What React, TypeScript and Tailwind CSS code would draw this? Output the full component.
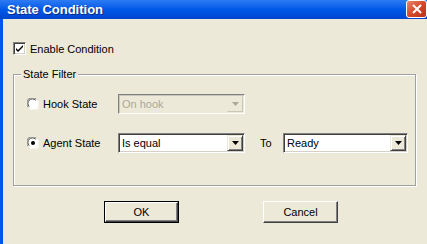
import React from "react"

const font = { fontFamily: "Tahoma, 'Liberation Sans', Arial, sans-serif" }

const Combo: React.FC<{ value: string; width: string; disabled?: boolean }> = ({ value, width, disabled }) => {
    return (
        <div
            className={`${width} h-[20px] flex border border-t-[#808080] border-l-[#808080] border-b-white border-r-white ${
                disabled ? "bg-[#ECE9D8] shadow-[inset_1px_1px_0_#C9C7BA]" : "bg-white shadow-[inset_1px_1px_0_#404040,inset_-1px_-1px_0_#D4D0C8]"
            }`}
        >
            <div className={`flex-1 flex items-center pl-[3px] pt-[1px] text-[11px] ${disabled ? "text-[#ACA899]" : "text-black"}`}>
                {value}
            </div>
            <div className="p-[1px] pl-0">
                <div
                    className={`w-[16px] h-full flex items-center justify-center bg-[#ECE9D8] border border-t-[#ECE9D8] border-l-[#ECE9D8] ${
                        disabled ? "border-b-[#C9C7BA] border-r-[#C9C7BA]" : "border-b-[#404040] border-r-[#404040] shadow-[inset_1px_1px_0_#fff,inset_-1px_-1px_0_#808080]"
                    }`}
                >
                    <svg width="7" height="4" viewBox="0 0 7 4">
                        <path d="M0 0h7L3.5 4z" fill={disabled ? "#ACA899" : "#000"} />
                    </svg>
                </div>
            </div>
        </div>
    )
}

const Radio: React.FC<{ checked?: boolean }> = ({ checked }) => (
    <svg width="12" height="12" viewBox="0 0 12 12" className="shrink-0">
        <circle cx="6" cy="6" r="5.5" fill="#fff" />
        <path d="M1.2 9.2A5.5 5.5 0 0 1 9.2 1.2" stroke="#808080" strokeWidth="1" fill="none" />
        <path d="M2.2 8.6A4.5 4.5 0 0 1 8.6 2.2" stroke="#404040" strokeWidth="1" fill="none" />
        <path d="M10.8 2.8A5.5 5.5 0 0 1 2.8 10.8" stroke="#fff" strokeWidth="1" fill="none" />
        {checked && <circle cx="6" cy="6" r="2" fill="#000" />}
    </svg>
)

const Button: React.FC<{ label: string; isDefault?: boolean }> = ({ label, isDefault }) => (
    <div className={`w-[75px] h-[22px] ${isDefault ? "border border-black" : ""}`}>
        <div
            className={`w-full h-full flex items-center justify-center text-[11px] text-black bg-[#ECE9D8] border border-t-white border-l-white border-b-[#404040] border-r-[#404040] shadow-[inset_-1px_-1px_0_#808080]`}
        >
            {label}
        </div>
    </div>
)

export default function App() {
    return (
        <div className="w-[427px] h-[244px] flex flex-col bg-[#ECE9D8] overflow-hidden" style={font}>
            {/* Title bar */}
            <div className="h-[19px] flex items-center justify-between pl-[7px] pr-0 bg-gradient-to-b from-[#2C7BF3] via-[#0058E8] to-[#0045D0]">
                <span className="text-white font-bold text-[13px] leading-none [text-shadow:1px_1px_0_#0A2A8A]">State Condition</span>
                <div className="w-[21px] h-[18px] -mt-[1px] rounded-[3px] border border-white bg-gradient-to-br from-[#E9856A] via-[#D8482A] to-[#B8301A] flex items-center justify-center">
                    <svg width="10" height="10" viewBox="0 0 10 10">
                        <path d="M1 1L9 9M9 1L1 9" stroke="#fff" strokeWidth="2" />
                    </svg>
                </div>
            </div>

            <div className="flex-1 flex">
                <div className="w-[3px] bg-[#0055EA]" />
                <div className="flex-1 flex flex-col pt-[23px] text-[11px] text-black">
                    {/* Enable checkbox */}
                    <div className="h-[13px] flex items-center pl-[10px]">
                        <div className="w-[13px] h-[13px] bg-white border border-t-[#808080] border-l-[#808080] border-b-white border-r-white shadow-[inset_1px_1px_0_#404040,inset_-1px_-1px_0_#D4D0C8] flex items-center justify-center">
                            <svg width="9" height="9" viewBox="0 0 9 9">
                                <path d="M1 4l2 2 5-5v2l-5 5-2-2z" fill="#000" />
                            </svg>
                        </div>
                        <span className="ml-[4px] pt-[1px]">Enable Condition</span>
                    </div>

                    {/* State Filter group */}
                    <div className="relative ml-[10px] mt-[19px] w-[403px] h-[112px] border border-[#A0A0A0] shadow-[1px_1px_0_#fff,inset_1px_1px_0_#fff] flex flex-col pt-[19px] pl-[13px]">
                        <span className="absolute -top-[7px] left-[7px] px-[2px] bg-[#ECE9D8] leading-[13px]">State Filter</span>

                        <div className="h-[20px] flex items-center">
                            <Radio />
                            <span className="ml-[4px] w-[75px]">Hook State</span>
                            <Combo value="On hook" width="w-[127px]" disabled />
                        </div>

                        <div className="h-[20px] mt-[19px] flex items-center">
                            <Radio checked />
                            <span className="ml-[4px] w-[75px]">Agent State</span>
                            <Combo value="Is equal" width="w-[127px]" />
                            <span className="ml-[15px] w-[23px]">To</span>
                            <Combo value="Ready" width="w-[125px]" />
                        </div>
                    </div>

                    {/* Buttons */}
                    <div className="flex pl-[101px] mt-[15px] gap-[84px]">
                        <Button label="OK" isDefault />
                        <Button label="Cancel" />
                    </div>
                </div>
            </div>
        </div>
    )
}
